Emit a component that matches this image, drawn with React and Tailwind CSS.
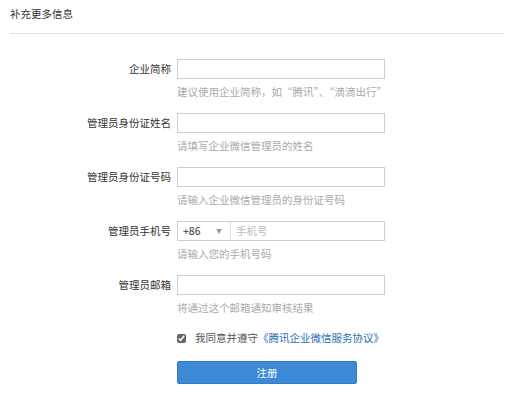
import React, { useState } from "react";

const font = { fontFamily: '"Noto Sans CJK SC", "Liberation Sans", sans-serif' };

const Row = ({ label, hint, children }) => (
  <div className="flex flex-col">
    <div className="flex items-center">
      <label className="w-[177px] shrink-0 pr-[6px] text-right text-[10.5px] leading-[14px] text-[#333]">{label}</label>
      {children}
    </div>
    <div className="ml-[177px] mt-[6px] h-[14px] text-[10.5px] leading-[14px] text-[#aaa]">{hint}</div>
  </div>
);

const Input = () => (
  <input className="h-[20px] w-[208px] border border-[#cfcfcf] bg-white px-1 text-[11px] outline-none" />
);

export default function App() {
  const [agree, setAgree] = useState(true);

  return (
    <div className="h-[413px] w-[515px] bg-white" style={font}>
      <div className="px-[10px] pt-[7px]">
        <h2 className="text-[10.5px] leading-[14px] text-[#333]">补充更多信息</h2>
        <div className="mt-[12px] border-t border-[#e3e3e3]" />
      </div>

      <div className="mt-[25px] flex flex-col gap-[14px]">
        <Row label="企业简称" hint="建议使用企业简称，如“腾讯”、“滴滴出行”">
          <Input />
        </Row>
        <Row label="管理员身份证姓名" hint="请填写企业微信管理员的姓名">
          <Input />
        </Row>
        <Row label="管理员身份证号码" hint="请输入企业微信管理员的身份证号码">
          <Input />
        </Row>
        <Row label="管理员手机号" hint="请输入您的手机号码">
          <div className="flex h-[20px] w-[208px] items-center border border-[#cfcfcf] bg-white text-[10.5px] leading-[14px]">
            <div className="flex h-full w-[53px] items-center justify-between border-r border-[#dcdcdc] pl-[5px] pr-[8px] text-[#333]">
              <span>+86</span>
              <span className="text-[6px] text-[#999]">▼</span>
            </div>
            <span className="pl-[5px] text-[#bbb]">手机号</span>
          </div>
        </Row>
        <Row label="管理员邮箱" hint="将通过这个邮箱通知审核结果">
          <Input />
        </Row>
      </div>

      <div className="ml-[177px] mt-[16px] flex items-center text-[10.5px] leading-[14px]">
        <input
          type="checkbox"
          checked={agree}
          onChange={(e) => setAgree(e.target.checked)}
          className="m-0 h-[9px] w-[9px] accent-[#666]"
        />
        <span className="ml-[9px] text-[#555]">我同意并遵守</span>
        <a className="text-[#2d6db5]">《腾讯企业微信服务协议》</a>
      </div>

      <button className="ml-[177px] mt-[16px] h-[23px] w-[180px] rounded-[2px] border border-[#3379c4] bg-[#3d89d6] text-[10.5px] text-white">
        注册
      </button>
    </div>
  );
}
